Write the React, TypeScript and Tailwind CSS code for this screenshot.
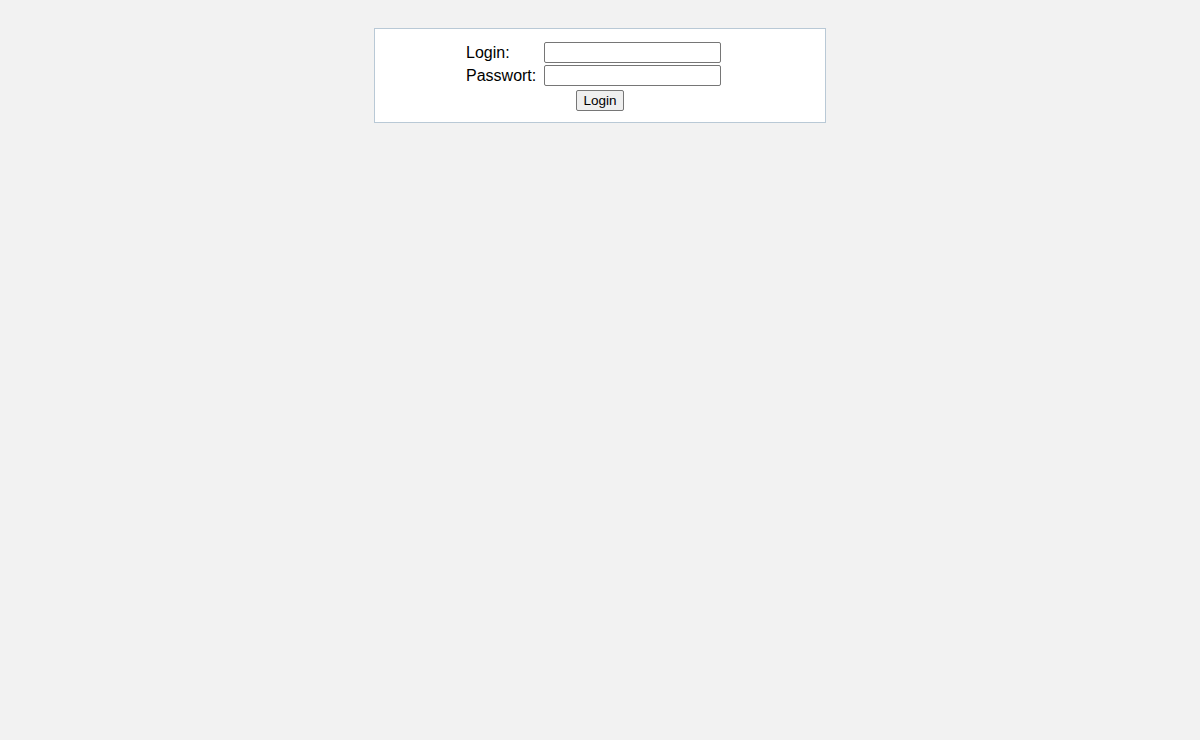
export default function App() {
    return (
        <div className="min-h-screen bg-[#f2f2f2] pt-[28px] font-['Liberation_Sans',Arial,sans-serif] text-black">
            {/* Login box */}
            <div className="mx-auto w-[452px] h-[95px] bg-white border border-[#b9c9d6] pt-[13px]">
                <div className="mx-auto w-[268px] grid grid-cols-[78px_177px] gap-y-[2px] items-center text-[16px]">
                    <label className="leading-[21px]">Login:</label>
                    <input
                        type="text"
                        className="h-[21px] w-[177px] border border-[#767676] rounded-[2px] bg-white px-1 text-[13px] outline-none"
                    />
                    <label className="leading-[21px]">Passwort:</label>
                    <input
                        type="password"
                        className="h-[21px] w-[177px] border border-[#767676] rounded-[2px] bg-white px-1 text-[13px] outline-none"
                    />
                </div>
                <div className="flex justify-center mt-[4px]">
                    <button className="h-[21px] w-[48px] bg-[#efefef] border border-[#767676] rounded-[2px] text-[13.5px] leading-none">
                        Login
                    </button>
                </div>
            </div>
        </div>
    );
}
